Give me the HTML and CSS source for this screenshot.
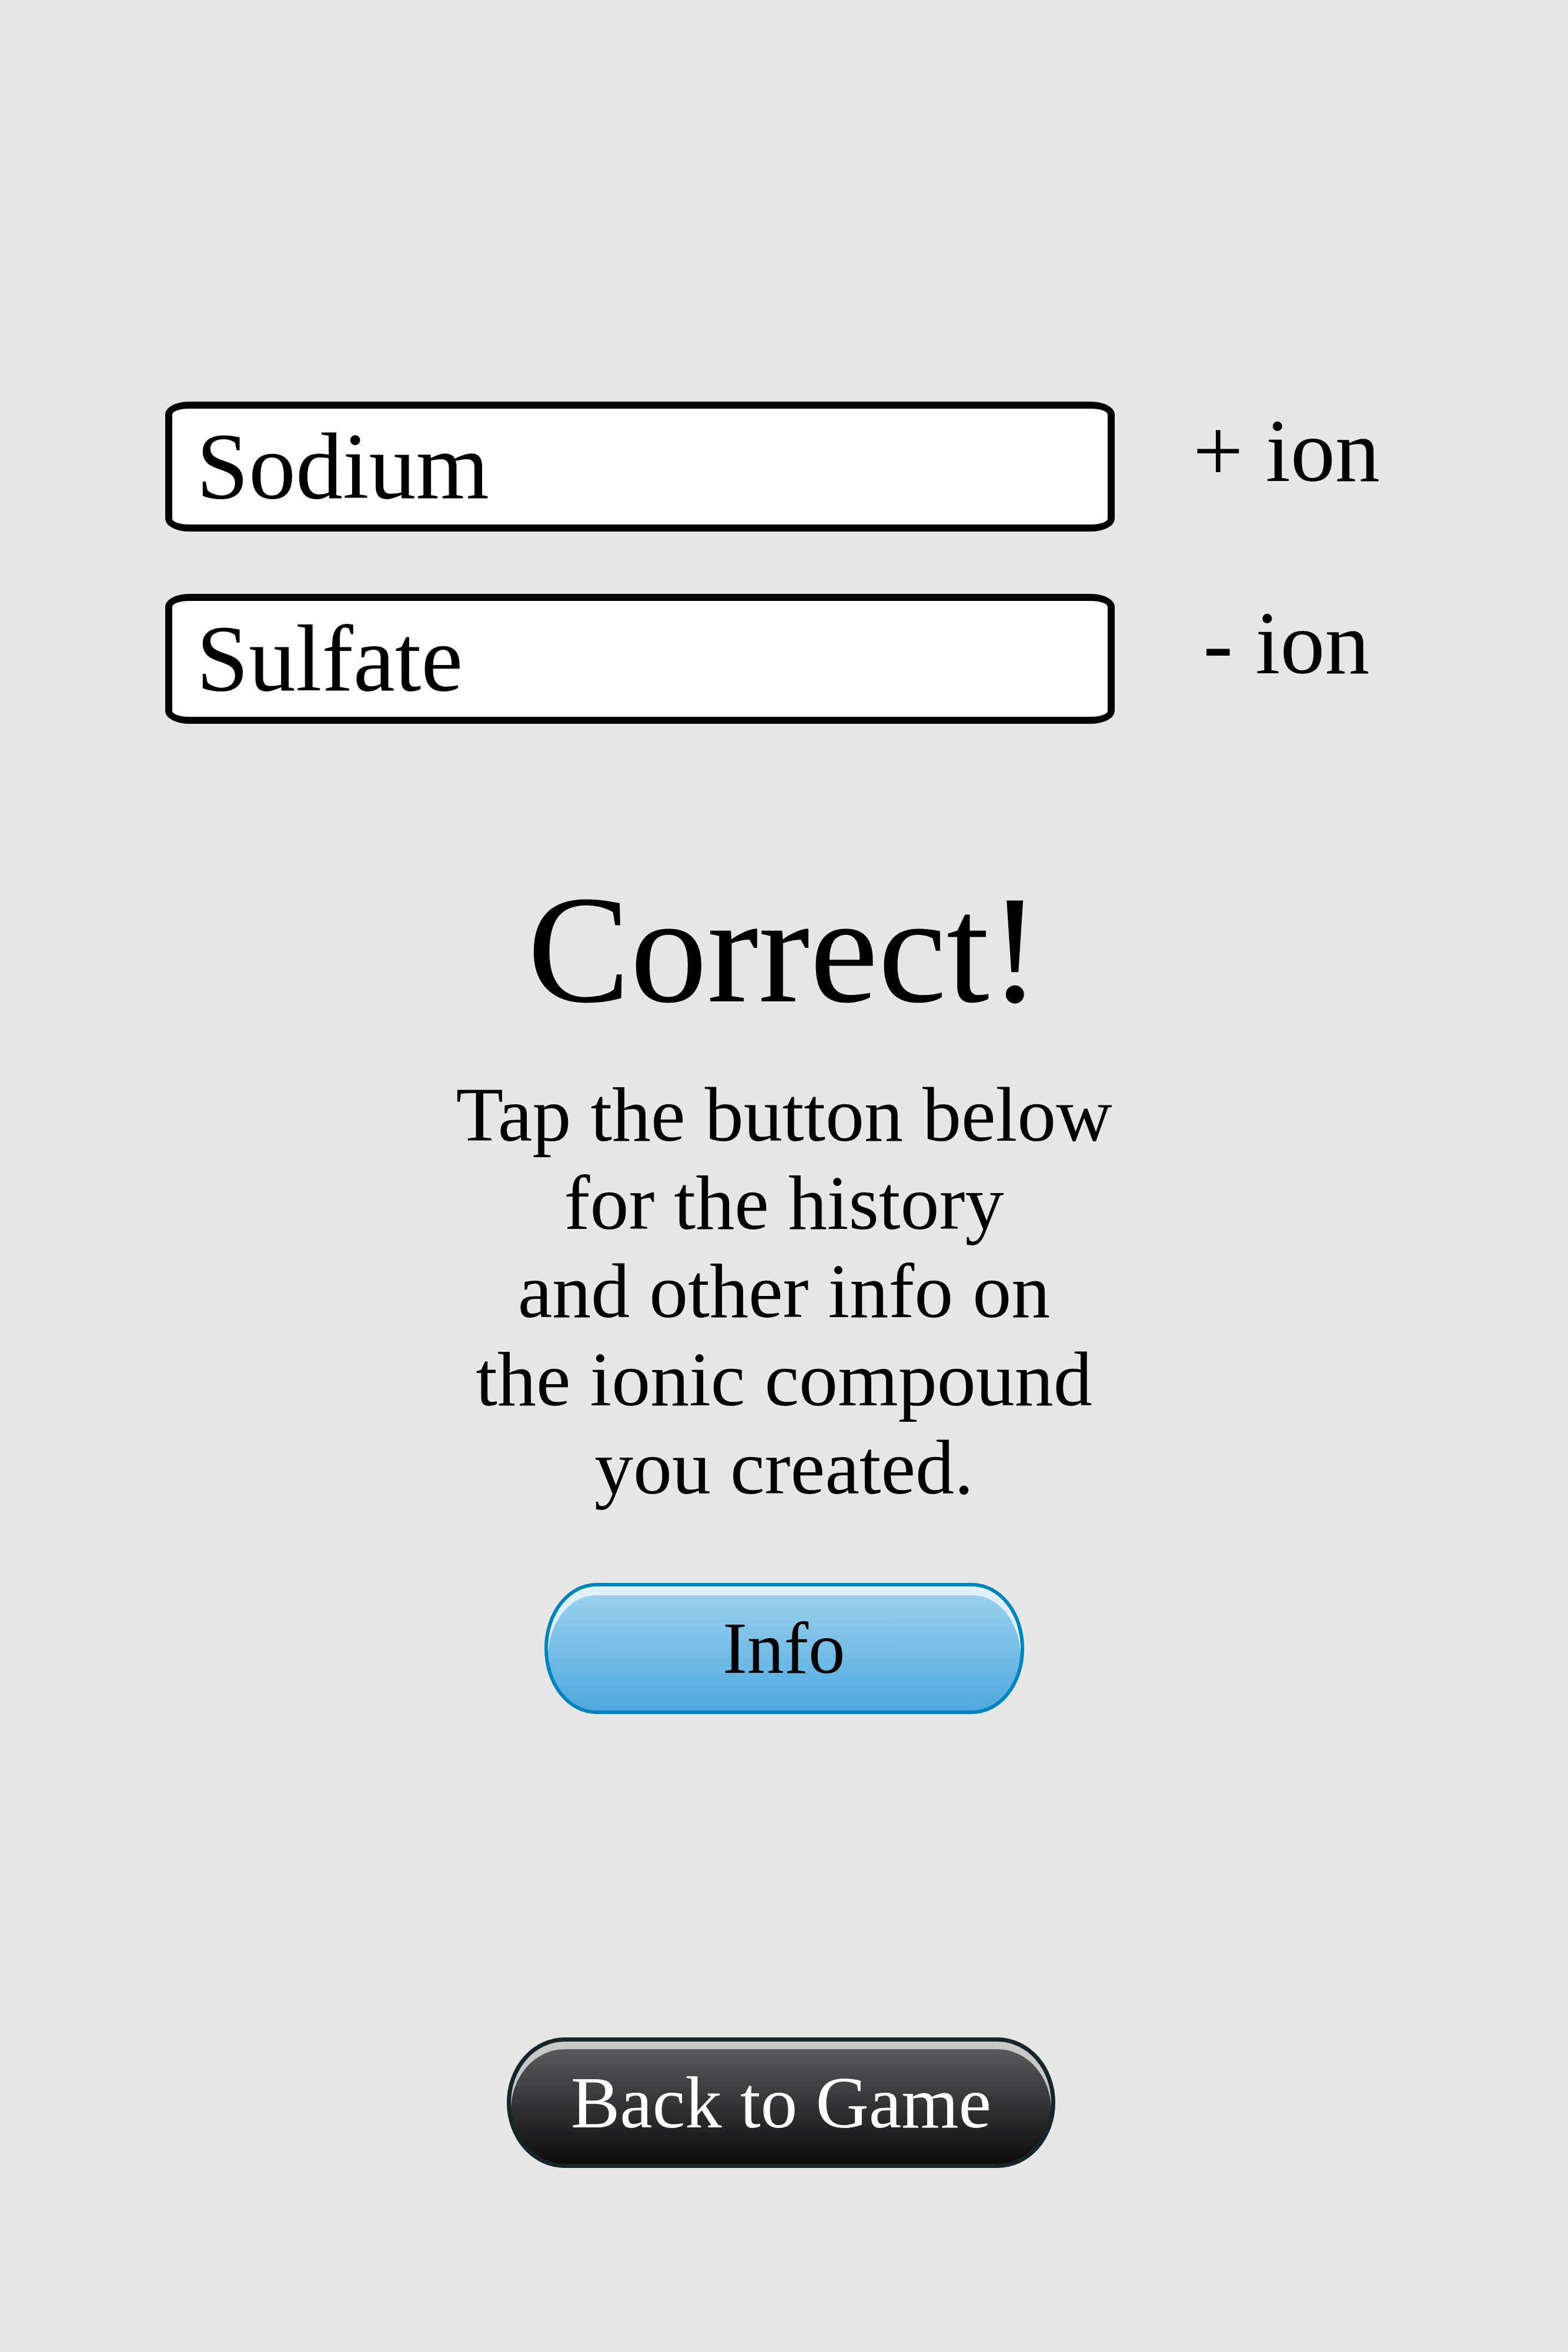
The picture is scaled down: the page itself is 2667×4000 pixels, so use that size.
FILE: index.html
```html
<!DOCTYPE html>
<html lang="en">
<head>
<meta charset="utf-8">
<title>Correct!</title>
<link rel="stylesheet" href="styles.css">
</head>
<body>
<main class="screen">
  <section class="ions">
    <div class="ion-row">
      <div class="ion-box">Sodium</div>
      <div class="ion-label">+ ion</div>
    </div>
    <div class="ion-row">
      <div class="ion-box">Sulfate</div>
      <div class="ion-label">- ion</div>
    </div>
  </section>
  <section class="result">
    <h1 class="result-title">Correct!</h1>
    <p class="result-text">Tap the button below<br>for the history<br>and other info on<br>the ionic compound<br>you created.</p>
    <button class="btn btn-info" type="button">Info</button>
  </section>
  <footer class="footer">
    <button class="btn btn-back" type="button">Back to Game</button>
  </footer>
</main>
</body>
</html>
```
FILE: styles.css
```css
html, body {
  margin: 0;
  padding: 0;
}

body {
  background: #e6e6e6;
  font-family: "Liberation Serif", "Times New Roman", serif;
  color: #000;
}

.screen {
  width: 2667px;
  height: 4000px;
  box-sizing: border-box;
  padding-top: 683px;
  overflow: hidden;
}

.ions {
  display: flex;
  flex-direction: column;
  gap: 106px;
  padding-left: 281px;
}

.ion-row {
  display: flex;
  align-items: flex-start;
}

.ion-box {
  width: 1615px;
  height: 221px;
  box-sizing: border-box;
  border: 12px solid #000;
  border-radius: 40px / 22px;
  background: #fff;
  padding-left: 41px;
  font-size: 160px;
  line-height: 197px;
  white-space: nowrap;
}

.ion-label {
  width: 400px;
  margin-left: 92px;
  text-align: center;
  font-size: 152px;
  line-height: 169px;
  white-space: nowrap;
}

.result {
  margin-top: 246px;
  display: flex;
  flex-direction: column;
  align-items: center;
  text-align: center;
}

.result-title {
  margin: 0;
  font-weight: normal;
  font-size: 262px;
  line-height: 276px;
}

.result-text {
  margin: 68px 0 0;
  font-size: 132px;
  line-height: 150px;
}

.btn {
  display: block;
  box-sizing: border-box;
  padding: 0;
  margin: 0;
  font-family: "Liberation Serif", "Times New Roman", serif;
  font-size: 125px;
  text-align: center;
  white-space: nowrap;
}

.btn-info {
  margin-top: 121px;
  width: 816px;
  height: 223px;
  border: 6px solid #0083bb;
  border-radius: 88px / 111px;
  line-height: 211px;
  color: #000;
  background: linear-gradient(#9fd3ef, #4ea9de);
  box-shadow: inset 0 15px 0 #dff0fa;
}

.footer {
  display: flex;
  justify-content: center;
  margin-top: 550px;
  padding-right: 10px;
}

.btn-back {
  width: 933px;
  height: 222px;
  border: 7px solid #16262b;
  border-radius: 98px / 111px;
  line-height: 208px;
  color: #fff;
  background: linear-gradient(#5f5f61, #0c0c0d);
  box-shadow: inset 0 13px 0 #c8c8c8;
}
```
